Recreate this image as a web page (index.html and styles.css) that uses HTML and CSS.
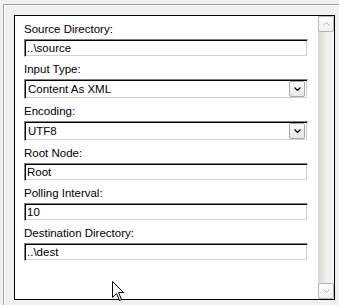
FILE: index.html
```html
<!DOCTYPE html>
<html lang="en">
<head>
  <meta charset="UTF-8" />
  <meta name="viewport" content="width=device-width, initial-scale=1.0" />
  <title>Adapter Settings</title>
  <link rel="stylesheet" href="styles.css">
</head>
<body>
  <div class="frame">
    <div class="panel">
      <div class="fields">
        <div class="field">
          <label>Source Directory:</label>
          <input type="text" class="text" value="..\source" />
        </div>
        <div class="field">
          <label>Input Type:</label>
          <div class="combo">
            <span class="combo-value">Content As XML</span>
            <span class="drop"><svg width="7" height="4" viewBox="0 0 7 4"><path d="M0.5 0.5 L3.5 3.5 L6.5 0.5" fill="none" stroke="#000" stroke-width="1.2"/></svg></span>
          </div>
        </div>
        <div class="field">
          <label>Encoding:</label>
          <div class="combo">
            <span class="combo-value">UTF8</span>
            <span class="drop"><svg width="7" height="4" viewBox="0 0 7 4"><path d="M0.5 0.5 L3.5 3.5 L6.5 0.5" fill="none" stroke="#000" stroke-width="1.2"/></svg></span>
          </div>
        </div>
        <div class="field">
          <label>Root Node:</label>
          <input type="text" class="text" value="Root" />
        </div>
        <div class="field">
          <label>Polling Interval:</label>
          <input type="text" class="text" value="10" />
        </div>
        <div class="field">
          <label>Destination Directory:</label>
          <input type="text" class="text" value="..\dest" />
        </div>
      </div>
      <div class="scrollbar">
        <span class="scroll-btn"><svg width="7" height="4" viewBox="0 0 7 4"><path d="M0.5 3.5 L3.5 0.5 L6.5 3.5" fill="none" stroke="#b4b4b4" stroke-width="1"/></svg></span>
        <span class="scroll-btn"><svg width="7" height="4" viewBox="0 0 7 4"><path d="M0.5 0.5 L3.5 3.5 L6.5 0.5" fill="none" stroke="#b4b4b4" stroke-width="1"/></svg></span>
      </div>
    </div>
  </div>

  <svg class="cursor" width="13" height="20" viewBox="0 0 13 20">
    <path d="M0.5 0.5 L0.5 16.5 L4.5 12.5 L7.5 19.5 L9.5 18.5 L6.5 11.5 L11.5 11.5 Z" fill="#fff" stroke="#000" stroke-width="1"/>
  </svg>
</body>
</html>
```

FILE: styles.css
```css
body {
  margin: 0;
  background-color: #f0f0f0;
  font-family: "Liberation Sans", Arial, sans-serif;
  font-size: 11.5px;
  color: #000;
  overflow: hidden;
  position: relative;
  height: 305px;
}
.frame {
  margin: 4px 0 0 3px;
  padding: 10px 0 0 10px;
  height: 301px;
  box-sizing: border-box;
  border-top: 1px solid #a0a0a0;
  border-left: 1px solid #a0a0a0;
  box-shadow: inset 1px 1px 0 #fff;
}
.panel {
  width: 321px;
  height: 285px;
  box-sizing: border-box;
  border: 1px solid #000;
  background-color: #fff;
  display: flex;
}
.fields {
  flex: 1;
  padding: 7px 10px 0 9px;
}
.field {
  margin-bottom: 6px;
}
label {
  display: block;
  line-height: 13px;
  margin-bottom: 3px;
}
.text,
.combo {
  display: block;
  width: 100%;
  box-sizing: border-box;
  border: 1px solid;
  border-color: #808080 #fff #fff #808080;
  box-shadow: inset 1px 1px 0 #000, inset -1px -1px 0 #d4d0c8;
  background-color: #fff;
  font: inherit;
  color: #000;
}
.text {
  height: 18px;
  padding: 0 2px;
  margin: 0;
  outline: none;
}
.combo {
  height: 20px;
  padding: 1px;
  display: flex;
  align-items: center;
}
.combo-value {
  flex: 1;
  padding-left: 2px;
}
.drop {
  width: 16px;
  height: 16px;
  box-sizing: border-box;
  border: 1px solid #a8a8a8;
  border-radius: 2px;
  background: linear-gradient(#fdfdfd, #e6e6e2);
  display: flex;
  align-items: center;
  justify-content: center;
  margin-left: auto;
  margin-right: 1px;
}
.scrollbar {
  width: 16px;
  display: flex;
  flex-direction: column;
  justify-content: space-between;
  background: linear-gradient(to right, #d8d8d2, #efefeb 50%, #f6f6f4);
}
.scroll-btn {
  height: 16px;
  box-sizing: border-box;
  border: 1px solid #b8b8b8;
  border-radius: 2px;
  background: linear-gradient(#fdfdfd, #f0f0ee);
  display: flex;
  align-items: center;
  justify-content: center;
}
.cursor {
  position: absolute;
  left: 112px;
  top: 281px;
}
```
